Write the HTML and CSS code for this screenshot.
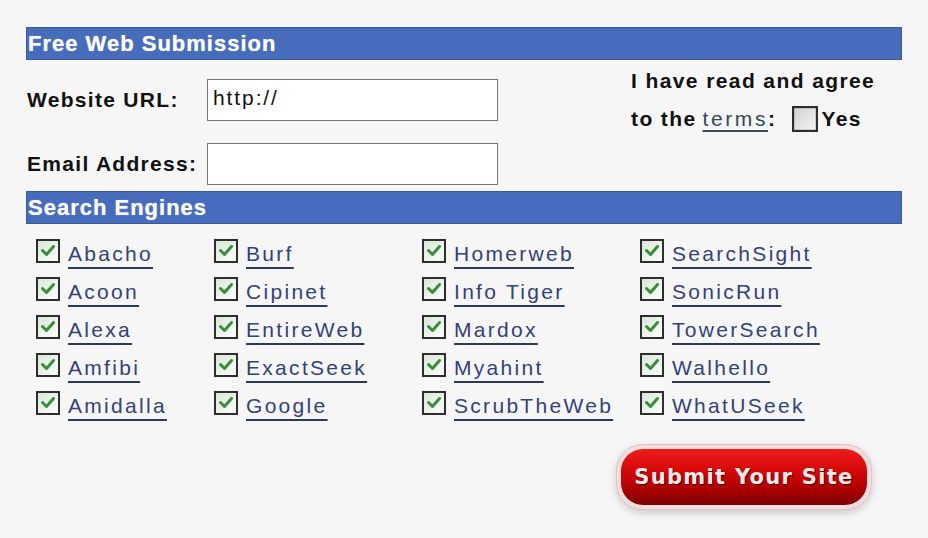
FILE: index.html
```html
<!DOCTYPE html>
<html>
<head>
<meta charset="utf-8">
<link rel="stylesheet" href="styles.css">
</head>
<body>
<svg class="defs" width="0" height="0">
  <defs>
    <linearGradient id="boxfill" x1="0" y1="0" x2="1" y2="1">
      <stop offset="0" stop-color="#d6e6d6"/>
      <stop offset="1" stop-color="#ffffff"/>
    </linearGradient>
    <linearGradient id="emptyfill" x1="0" y1="0" x2="1" y2="1">
      <stop offset="0" stop-color="#cfcfcf"/>
      <stop offset="1" stop-color="#f6f6f6"/>
    </linearGradient>
    <symbol id="chk" viewBox="0 0 24 24">
      <rect x="1" y="1" width="22" height="22" fill="url(#boxfill)" stroke="#2e2e2e" stroke-width="2"/>
      <polyline points="6.5,11.5 10.5,15.5 17.5,7.5" fill="none" stroke="#3b8c3b" stroke-width="3" stroke-linecap="round" stroke-linejoin="round"/>
    </symbol>
  </defs>
</svg>
<div class="panel">
  <div class="bar">Free Web Submission</div>
  <div class="form-area">
    <div class="fields">
      <div class="field-row">
        <label class="label" for="url">Website URL:</label>
        <input class="text-input" id="url" type="text" value="http://">
      </div>
      <div class="field-row">
        <label class="label" for="email">Email Address:</label>
        <input class="text-input" id="email" type="text">
      </div>
    </div>
    <div class="agree">
      <div>I have read and agree</div>
      <div class="agree-line">to the <a class="terms" href="#">terms</a>:<span class="empty-box"><svg width="26" height="26" viewBox="0 0 24 24"><rect x="1" y="1" width="22" height="22" fill="url(#emptyfill)" stroke="#2e2e2e" stroke-width="2"/></svg></span>Yes</div>
    </div>
  </div>
  <div class="bar bar-second">Search Engines</div>
  <ul class="engines">
    <li><svg class="chk"><use href="#chk"/></svg><a href="#">Abacho</a></li>
    <li><svg class="chk"><use href="#chk"/></svg><a href="#">Acoon</a></li>
    <li><svg class="chk"><use href="#chk"/></svg><a href="#">Alexa</a></li>
    <li><svg class="chk"><use href="#chk"/></svg><a href="#">Amfibi</a></li>
    <li><svg class="chk"><use href="#chk"/></svg><a href="#">Amidalla</a></li>
    <li><svg class="chk"><use href="#chk"/></svg><a href="#">Burf</a></li>
    <li><svg class="chk"><use href="#chk"/></svg><a href="#">Cipinet</a></li>
    <li><svg class="chk"><use href="#chk"/></svg><a href="#">EntireWeb</a></li>
    <li><svg class="chk"><use href="#chk"/></svg><a href="#">ExactSeek</a></li>
    <li><svg class="chk"><use href="#chk"/></svg><a href="#">Google</a></li>
    <li><svg class="chk"><use href="#chk"/></svg><a href="#">Homerweb</a></li>
    <li><svg class="chk"><use href="#chk"/></svg><a href="#">Info Tiger</a></li>
    <li><svg class="chk"><use href="#chk"/></svg><a href="#">Mardox</a></li>
    <li><svg class="chk"><use href="#chk"/></svg><a href="#">Myahint</a></li>
    <li><svg class="chk"><use href="#chk"/></svg><a href="#">ScrubTheWeb</a></li>
    <li><svg class="chk"><use href="#chk"/></svg><a href="#">SearchSight</a></li>
    <li><svg class="chk"><use href="#chk"/></svg><a href="#">SonicRun</a></li>
    <li><svg class="chk"><use href="#chk"/></svg><a href="#">TowerSearch</a></li>
    <li><svg class="chk"><use href="#chk"/></svg><a href="#">Walhello</a></li>
    <li><svg class="chk"><use href="#chk"/></svg><a href="#">WhatUSeek</a></li>
  </ul>
  <div class="submit-row">
    <button class="submit" type="button">Submit Your Site</button>
  </div>
</div>
</body>
</html>
```

FILE: styles.css
```css
html, body {
  margin: 0;
  padding: 0;
  background: #f6f6f6;
}
body {
  font-family: "Liberation Sans", Arial, sans-serif;
  color: #111;
  min-height: 538px;
}
.defs {
  position: absolute;
  width: 0;
  height: 0;
}
.panel {
  margin: 27px 0 0 26px;
  width: 876px;
  padding-bottom: 30px;
}
.bar {
  height: 31px;
  line-height: 31px;
  background: #466cbb;
  border: 1px solid #3a5a9c;
  color: #ffffff;
  font-weight: bold;
  font-size: 22px;
  letter-spacing: 1px;
  padding-left: 1px;
  text-shadow: 0 0 1px #c8d4f0;
}
.form-area {
  display: flex;
  padding-top: 2px;
}
.fields {
  display: flex;
  flex-direction: column;
  gap: 22px;
  padding-top: 17px;
}
.field-row {
  display: flex;
  align-items: center;
}
.label {
  width: 180px;
  padding-left: 1px;
  font-weight: bold;
  font-size: 21px;
  letter-spacing: 1.3px;
  color: #111;
}
.text-input {
  box-sizing: border-box;
  width: 291px;
  height: 42px;
  border: 1px solid #777;
  background: #fff;
  padding: 0 0 4px 5px;
  font-family: "Liberation Sans", Arial, sans-serif;
  font-size: 21px;
  letter-spacing: 1.9px;
  color: #111;
  outline: none;
}
.agree {
  margin-left: 133px;
  font-weight: bold;
  font-size: 21px;
  line-height: 38px;
  letter-spacing: 1.4px;
  color: #111;
}
.agree-line {
  display: flex;
  align-items: center;
}
.terms {
  font-weight: normal;
  color: #34485e;
  text-decoration: underline;
  text-decoration-color: #3a4a5a;
  text-underline-offset: 4px;
  text-decoration-thickness: 2px;
  letter-spacing: 2.6px;
  margin-left: 6px;
}
.empty-box {
  display: inline-flex;
  margin: 0 3px 0 16px;
}
.bar-second {
  margin-top: 6px;
}
.engines {
  list-style: none;
  margin: 0;
  padding: 10px 0 0 10px;
  display: grid;
  grid-template-columns: 178px 208px 218px auto;
  grid-template-rows: repeat(5, 38px);
  grid-auto-flow: column;
}
.engines li {
  display: flex;
  align-items: center;
}
.chk {
  width: 24px;
  height: 24px;
  flex: none;
  margin-right: 8px;
  margin-top: -4px;
}
.engines a {
  font-size: 21px;
  letter-spacing: 2.3px;
  color: #33427a;
  text-decoration: underline;
  text-decoration-color: #2e3a55;
  text-decoration-thickness: 2px;
  text-underline-offset: 6px;
  margin-top: 2px;
}
.submit-row {
  display: flex;
  justify-content: flex-end;
  padding: 25px 35px 0 0;
}
.submit {
  width: 246px;
  height: 56px;
  border: none;
  border-radius: 22px;
  background: linear-gradient(#f01c1c 0%, #d40808 40%, #a80000 75%, #7c0000 100%);
  box-shadow: 0 0 0 4px #f7dede, 0 0 0 5px #e6c4c4, 0 3px 8px 5px rgba(0, 0, 0, 0.18);
  color: #f7e8e8;
  font-family: "DejaVu Sans", Verdana, sans-serif;
  font-weight: bold;
  font-size: 21px;
  letter-spacing: 1.3px;
  text-shadow: 1px 1px 1px #4a0000;
  padding: 0;
}
```
